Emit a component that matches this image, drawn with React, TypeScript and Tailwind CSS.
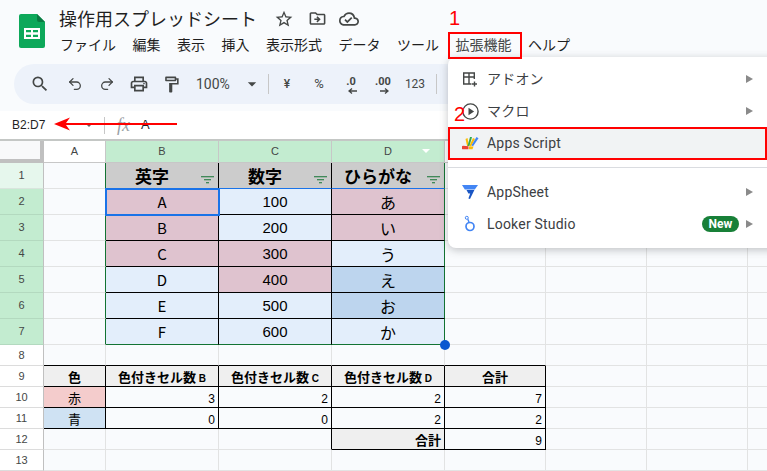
import React from "react";
import { MdSearch, MdOutlineLocalPrintshop, MdOutlineFormatPaint, MdOutlineStarBorder, MdOutlineDriveFileMove, MdOutlineCloudDone, MdArrowDropDown } from "react-icons/md";
import { Undo2, Redo2 } from "lucide-react";

const colHeads = [
  { t: "", c: "bg-white" },
  { t: "A", c: "bg-white text-[#444746]" },
  { t: "B", c: "bg-[#c3ecd0] text-[#444746]" },
  { t: "C", c: "bg-[#c3ecd0] text-[#444746]" },
  { t: "D", c: "bg-[#c3ecd0] text-[#444746]" },
  { t: "", c: "bg-white" },
  { t: "", c: "bg-white" },
  { t: "", c: "bg-white" },
  { t: "", c: "bg-white" },
];

const PINK = "bg-[#dfc3cf]";
const LB = "bg-[#e3eefb]";
const BL = "bg-[#bdd5ee]";

const FilterIcon = () => (
  <svg width="13" height="8" viewBox="0 0 13 8" className="absolute right-[4px] bottom-[4px]">
    <path d="M0 .75h13M3 3.75h7M5 6.75h3" stroke="#137333" strokeWidth="1.2" fill="none" />
  </svg>
);

function Cell({ className = "", children }: { className?: string; children?: React.ReactNode }) {
  return <div className={"relative flex items-center border-r border-b " + className}>{children}</div>;
}

function RowHead({ n, c }: { n: number; c: string }) {
  return (
    <div className={"flex items-center justify-center border-b text-[11px] font-['Liberation_Sans',sans-serif] " + c}>
      {n}
    </div>
  );
}

function Filler({ className = "" }: { className?: string }) {
  return <Cell className={"border-[#e2e3e3] " + className} />;
}

const data: [string, string, string, string, string, string][] = [
  ["A", "100", "あ", PINK, LB, PINK],
  ["B", "200", "い", PINK, LB, PINK],
  ["C", "300", "う", PINK, PINK, LB],
  ["D", "400", "え", LB, PINK, BL],
  ["E", "500", "お", LB, LB, BL],
  ["F", "600", "か", LB, LB, LB],
];

function Grid() {
  return (
    <div className="grid grid-cols-[44px_62px_113px_113px_113px_101px_101px_101px_20px] grid-rows-[22px_26px_26px_26px_26px_26px_26px_26px_21px_21px_21px_21px_21px_21px] border-t-2 border-[#c4c7c5] font-['Noto_Sans_CJK_JP','Liberation_Sans',sans-serif] text-black">
      {/* column heads */}
      <div className="border-r-4 border-b-4 border-[#c0c0c0] bg-[#f8f9fa]" />
      {colHeads.slice(1).map((h, i) => (
        <div key={i} className={"relative flex items-center justify-center border-r border-b border-[#c7c7c7] text-[11px] font-['Liberation_Sans',sans-serif] " + h.c}>
          {h.t}
          {h.t === "D" && <span className="absolute right-[14px] top-[8px] h-0 w-0 border-x-[4px] border-t-[4px] border-x-transparent border-t-white" />}
        </div>
      ))}

      {/* row 1 */}
      <RowHead n={1} c="bg-[#e6f7ed] border-[#d9e5dd] border-r border-r-[#c0c0c0] text-[#444746]" />
      <Filler className="border-r-[#137333]" />
      {["英字", "数字", "ひらがな"].map((t, i) => (
        <Cell key={t} className={"justify-center pr-[20px] bg-[#cccccc] text-[17px] font-bold border-b-[#1a73e8] " + (i === 2 ? "border-r-[#137333]" : "border-r-black")}>
          {t}
          <FilterIcon />
        </Cell>
      ))}
      <Filler /><Filler /><Filler /><Filler className="border-r-0" />

      {/* rows 2-7 */}
      {data.map((r, idx) => {
        const last = idx === 5;
        const bb = last ? "border-b-[#137333]" : "border-b-black";
        return (
          <React.Fragment key={idx}>
            <RowHead n={idx + 2} c="bg-[#c3ecd0] border-[#b3d9bf] border-r border-r-[#c0c0c0] text-[#444746]" />
            <Filler className="border-r-[#137333]" />
            <Cell className={"justify-center pt-px text-[15px] border-r-black " + bb + " " + r[3] + (idx === 0 ? " outline-2 -outline-offset-1 outline-[#1a73e8] z-10" : "")}>{r[0]}</Cell>
            <Cell className={"justify-center pt-px text-[15px] font-['Liberation_Sans',sans-serif] border-r-black " + bb + " " + r[4]}>{r[1]}</Cell>
            <Cell className={"justify-center pt-px text-[16px] border-r-[#137333] " + bb + " " + r[5]}>
              {r[2]}
              {last && <span className="absolute -right-[6px] -bottom-[6px] z-20 h-[10px] w-[10px] rounded-full bg-[#0b57d0]" />}
            </Cell>
            <Filler /><Filler /><Filler /><Filler className="border-r-0" />
          </React.Fragment>
        );
      })}

      {/* row 8 */}
      <RowHead n={8} c="bg-white border-[#dcdcdc] border-r border-r-[#c0c0c0] text-[#444746]" />
      <Filler className="border-b-black" />
      <Filler className="border-b-black" />
      <Filler className="border-b-black" />
      <Filler className="border-b-black" />
      <Filler className="border-b-black" />
      <Filler /><Filler /><Filler className="border-r-0" />

      {/* row 9 */}
      <RowHead n={9} c="bg-white border-[#dcdcdc] border-r border-r-[#c0c0c0] text-[#444746]" />
      <Cell className="justify-center pt-px bg-[#efefef] border-black text-[13px] font-bold">色</Cell>
      {["B", "C", "D"].map((l) => (
        <Cell key={l} className="justify-center pt-px bg-[#efefef] border-black text-[13px] font-bold">
          <span>色付きセル数 <span className="text-[10px] font-['Liberation_Sans',sans-serif]">{l}</span></span>
        </Cell>
      ))}
      <Cell className="justify-center pt-px bg-[#efefef] border-black text-[13px] font-bold">合計</Cell>
      <Filler /><Filler /><Filler className="border-r-0" />

      {/* rows 10-11 */}
      {[
        { n: 10, t: "赤", c: "bg-[#f4cccc]", v: ["3", "2", "2", "7"] },
        { n: 11, t: "青", c: "bg-[#cfe2f3]", v: ["0", "0", "2", "2"] },
      ].map((r) => (
        <React.Fragment key={r.n}>
          <RowHead n={r.n} c="bg-white border-[#dcdcdc] border-r border-r-[#c0c0c0] text-[#444746]" />
          <Cell className={"justify-center pt-px border-black text-[13px] " + r.c}>{r.t}</Cell>
          {r.v.map((v, i) => (
            <Cell key={i} className="justify-end pr-[3px] pt-[4px] border-black text-[12px] font-['Liberation_Sans',sans-serif]">{v}</Cell>
          ))}
          <Filler /><Filler /><Filler className="border-r-0" />
        </React.Fragment>
      ))}

      {/* row 12 */}
      <RowHead n={12} c="bg-white border-[#dcdcdc] border-r border-r-[#c0c0c0] text-[#444746]" />
      <Filler />
      <Filler />
      <Filler className="border-r-black" />
      <Cell className="justify-end pr-[3px] pt-px bg-[#efefef] border-black text-[13px] font-bold">合計</Cell>
      <Cell className="justify-end pr-[3px] pt-[4px] border-black text-[12px] font-['Liberation_Sans',sans-serif]">9</Cell>
      <Filler /><Filler /><Filler className="border-r-0" />

      {/* row 13 */}
      <RowHead n={13} c="bg-white border-[#dcdcdc] border-r border-r-[#c0c0c0] text-[#444746]" />
      <Filler /><Filler /><Filler /><Filler /><Filler /><Filler /><Filler /><Filler className="border-r-0" />
    </div>
  );
}

function MenuItem({ icon, label, arrow = true, className = "", badge = false }: { icon: React.ReactNode; label: string; arrow?: boolean; className?: string; badge?: boolean }) {
  return (
    <div className={"flex h-[32px] items-center " + className}>
      <span className="flex w-[39px] justify-center pl-[5px]">{icon}</span>
      <span className="text-[14px] tracking-[0.2px] text-[#3c4043]">{label}</span>
      {badge && <span className="ml-auto mr-[7px] flex h-[16px] w-[37px] items-center justify-center rounded-full bg-[#188038] text-[12px] font-bold text-white">New</span>}
      {arrow && <span className={badge ? "mr-[14px] h-0 w-0 border-y-[4px] border-l-[7px] border-y-transparent border-l-[#8a8a8a]" : "ml-auto mr-[14px] h-0 w-0 border-y-[4px] border-l-[7px] border-y-transparent border-l-[#8a8a8a]"} />}
    </div>
  );
}

function Menu() {
  return (
    <div className="absolute left-[448px] top-[57px] z-30 w-[330px] rounded-l-lg bg-white pt-[6px] pb-[8px] pr-[11px] font-['Roboto','Noto_Sans_CJK_JP',sans-serif] shadow-[0_2px_8px_rgba(60,64,67,0.3)]">
      <MenuItem label="アドオン" icon={
        <svg width="18" height="18" viewBox="0 0 18 18" fill="none" stroke="#444746" strokeWidth="1.4">
          <path d="M10.5 14H2.7V3h10.6v6M2.7 7h10.6M8 3v11M13.5 11.5v5M11 14h5" />
        </svg>
      } />
      <MenuItem label="マクロ" icon={
        <svg width="19" height="19" viewBox="0 0 19 19">
          <circle cx="9.5" cy="9.5" r="7.6" fill="none" stroke="#444746" strokeWidth="1.4" />
          <path d="M7.5 5.8l5.6 3.7-5.6 3.7z" fill="#444746" />
        </svg>
      } />
      <MenuItem label="Apps Script" arrow={false} className="bg-[#f1f3f4]" icon={
        <svg width="17" height="14" viewBox="0 0 17 14">
          <path d="M3.5 3l2-1 1.5 8-1.8.4z" fill="#fbbc04" />
          <path d="M8 1l2 0 -2.5 9-2 0z" fill="#34a853" />
          <path d="M11 2l2 1 -4 7.5-1.7-.5z" fill="#fbbc04" />
          <path d="M14.5 1l2 1.2 -5.5 8-1.5-1z" fill="#4285f4" />
          <path d="M1 9.8l5.5.5v3H1.5a1.5 1.5 0 0 1-.5-3.5z" fill="#ea4335" />
          <path d="M7 10.5h4.5l-1 2.8H7z" fill="#fbbc04" />
        </svg>
      } />
      <div className="my-[8px] h-px bg-[#dadce0]" />
      <MenuItem label="AppSheet" icon={
        <svg width="16" height="14" viewBox="0 0 16 14">
          <path d="M0 0h16l-3.2 4.5H2.8z" fill="#4285f4" />
          <path d="M4.5 5h7.9l-4.4 9-1.6-.6L8.2 8.4H6.4z" fill="#1a56c4" />
        </svg>
      } />
      <MenuItem label="Looker Studio" badge icon={
        <svg width="14" height="18" viewBox="0 0 14 18" fill="none">
          <circle cx="7" cy="11.5" r="4" stroke="#4285f4" strokeWidth="1.7" />
          <circle cx="3.8" cy="2.8" r="1.5" stroke="#4285f4" strokeWidth="1" />
          <path d="M4.8 4.2L6 7" stroke="#4285f4" strokeWidth="1.4" />
        </svg>
      } />
    </div>
  );
}

const tool = "flex items-center justify-center w-[32px]";

function Toolbar() {
  return (
    <div className="ml-[14px] mt-px flex h-[40px] items-center rounded-l-[20px] bg-[#edf2fa] pl-[10px] text-[#444746] font-['Roboto',sans-serif]">
      <span className={tool}><MdSearch size={20} /></span>
      <span className={tool + " ml-[3px]"}><Undo2 size={16} strokeWidth={1.9} /></span>
      <span className={tool}><Redo2 size={16} strokeWidth={1.9} /></span>
      <span className={tool}><MdOutlineLocalPrintshop size={20} /></span>
      <span className={tool}><MdOutlineFormatPaint size={19} /></span>
      <span className="ml-[9px] w-[44px] text-[14px]">100%</span>
      <MdArrowDropDown size={20} className="ml-[2px]" />
      <span className="ml-[6px] h-[20px] w-px bg-[#c7c7c7]" />
      <span className={tool + " ml-[2px] text-[12px] font-medium"}>¥</span>
      <span className={tool + " text-[13px]"}>%</span>
      <span className={tool + " relative h-[24px] text-[11px] font-bold"}>
        <span className="-mt-[4px]">.0</span>
        <svg width="9" height="6" viewBox="0 0 9 6" className="absolute bottom-[2px] left-[13px]"><path d="M9 3H2M4 .5L1 3l3 2.5" stroke="#444746" strokeWidth="1.3" fill="none" /></svg>
      </span>
      <span className={tool + " relative h-[24px] text-[11px] font-bold"}>
        <span className="-mt-[4px]">.00</span>
        <svg width="9" height="6" viewBox="0 0 9 6" className="absolute bottom-[2px] left-[13px]"><path d="M0 3h7M5 .5L8 3 5 5.5" stroke="#444746" strokeWidth="1.3" fill="none" /></svg>
      </span>
      <span className={tool + " text-[12px]"}>123</span>
      <span className="ml-[5px] h-[20px] w-px bg-[#c7c7c7]" />
    </div>
  );
}

const menus = ["ファイル", "編集", "表示", "挿入", "表示形式", "データ", "ツール"];

export default function App() {
  return (
    <div className="relative h-[471px] w-[767px] overflow-hidden bg-[#f9fbfd] font-['Noto_Sans_CJK_JP','Roboto',sans-serif]">
      {/* header */}
      <div className="flex h-[63px] pl-[19px]">
        <svg width="26" height="34" viewBox="0 0 26 34" className="mt-[14px] shrink-0">
          <path d="M2 0h16l8 8v24a2 2 0 0 1-2 2H2a2 2 0 0 1-2-2V2a2 2 0 0 1 2-2z" fill="#0da85a" />
          <path d="M18 0l8 8h-6a2 2 0 0 1-2-2z" fill="#0a7a42" />
          <path d="M5 14h16v11H5z" fill="#fff" />
          <path d="M7 16v2.2h5V16zM14 16v2.2h5V16zM7 20.8V23h5v-2.2zM14 20.8V23h5v-2.2z" fill="#0da85a" />
        </svg>
        <div className="ml-[14px] flex flex-col">
          <div className="mt-[7px] flex h-[23px] items-center">
            <span className="text-[18px] leading-[23px] text-[#1f1f1f]">操作用スプレッドシート</span>
            <MdOutlineStarBorder size={20} className="ml-[17px] text-[#444746]" />
            <MdOutlineDriveFileMove size={19} className="ml-[14px] text-[#444746]" />
            <MdOutlineCloudDone size={20} className="ml-[12px] text-[#444746]" />
          </div>
          <div className="ml-px mt-[2px] flex h-[24px] items-center gap-[16.5px] text-[14px] text-[#1f1f1f]">
            {menus.map((m) => <span key={m}>{m}</span>)}
            <span className="text-[#444746]">拡張機能</span>
            <span>ヘルプ</span>
          </div>
        </div>
      </div>

      <Toolbar />

      {/* formula bar */}
      <div className="mt-[7px] flex h-[28px] items-center bg-white text-[13px] text-[#1f1f1f]">
        <span className="ml-[12px] w-[73px] font-['Liberation_Sans',sans-serif] text-[12px]">B2:D7</span>
        <span className="h-0 w-0 border-x-[4px] border-t-[4px] border-x-transparent border-t-[#666]" />
        <span className="ml-[11px] h-[17px] w-px bg-[#c7c7c7]" />
        <span className="ml-[12px] font-['Liberation_Serif',serif] text-[18px] italic text-[#9aa0a6]">fx</span>
        <span className="ml-[11px] font-['Liberation_Sans',sans-serif]">A</span>
      </div>

      <Grid />

      <Menu />

      {/* annotations */}
      <span className="absolute left-[449px] top-[6px] z-40 font-['Liberation_Sans',sans-serif] text-[20px] leading-[24px] text-[#ff0000]">1</span>
      <span className="absolute left-[454px] top-[102px] z-40 font-['Liberation_Sans',sans-serif] text-[20px] leading-[24px] text-[#ff0000]">2</span>
      <div className="absolute left-[448px] top-[32px] z-40 h-[27px] w-[74px] border-2 border-[#ff0000]" />
      <div className="absolute left-[448px] top-[127px] z-40 h-[33px] w-[319px] border-2 border-[#ff0000]" />
      <svg width="126" height="14" viewBox="0 0 126 14" className="absolute left-[53px] top-[117px] z-40">
        <path d="M1 7L17 .5 13 6h111v2H13l4 5.5z" fill="#ff0000" />
      </svg>
    </div>
  );
}
